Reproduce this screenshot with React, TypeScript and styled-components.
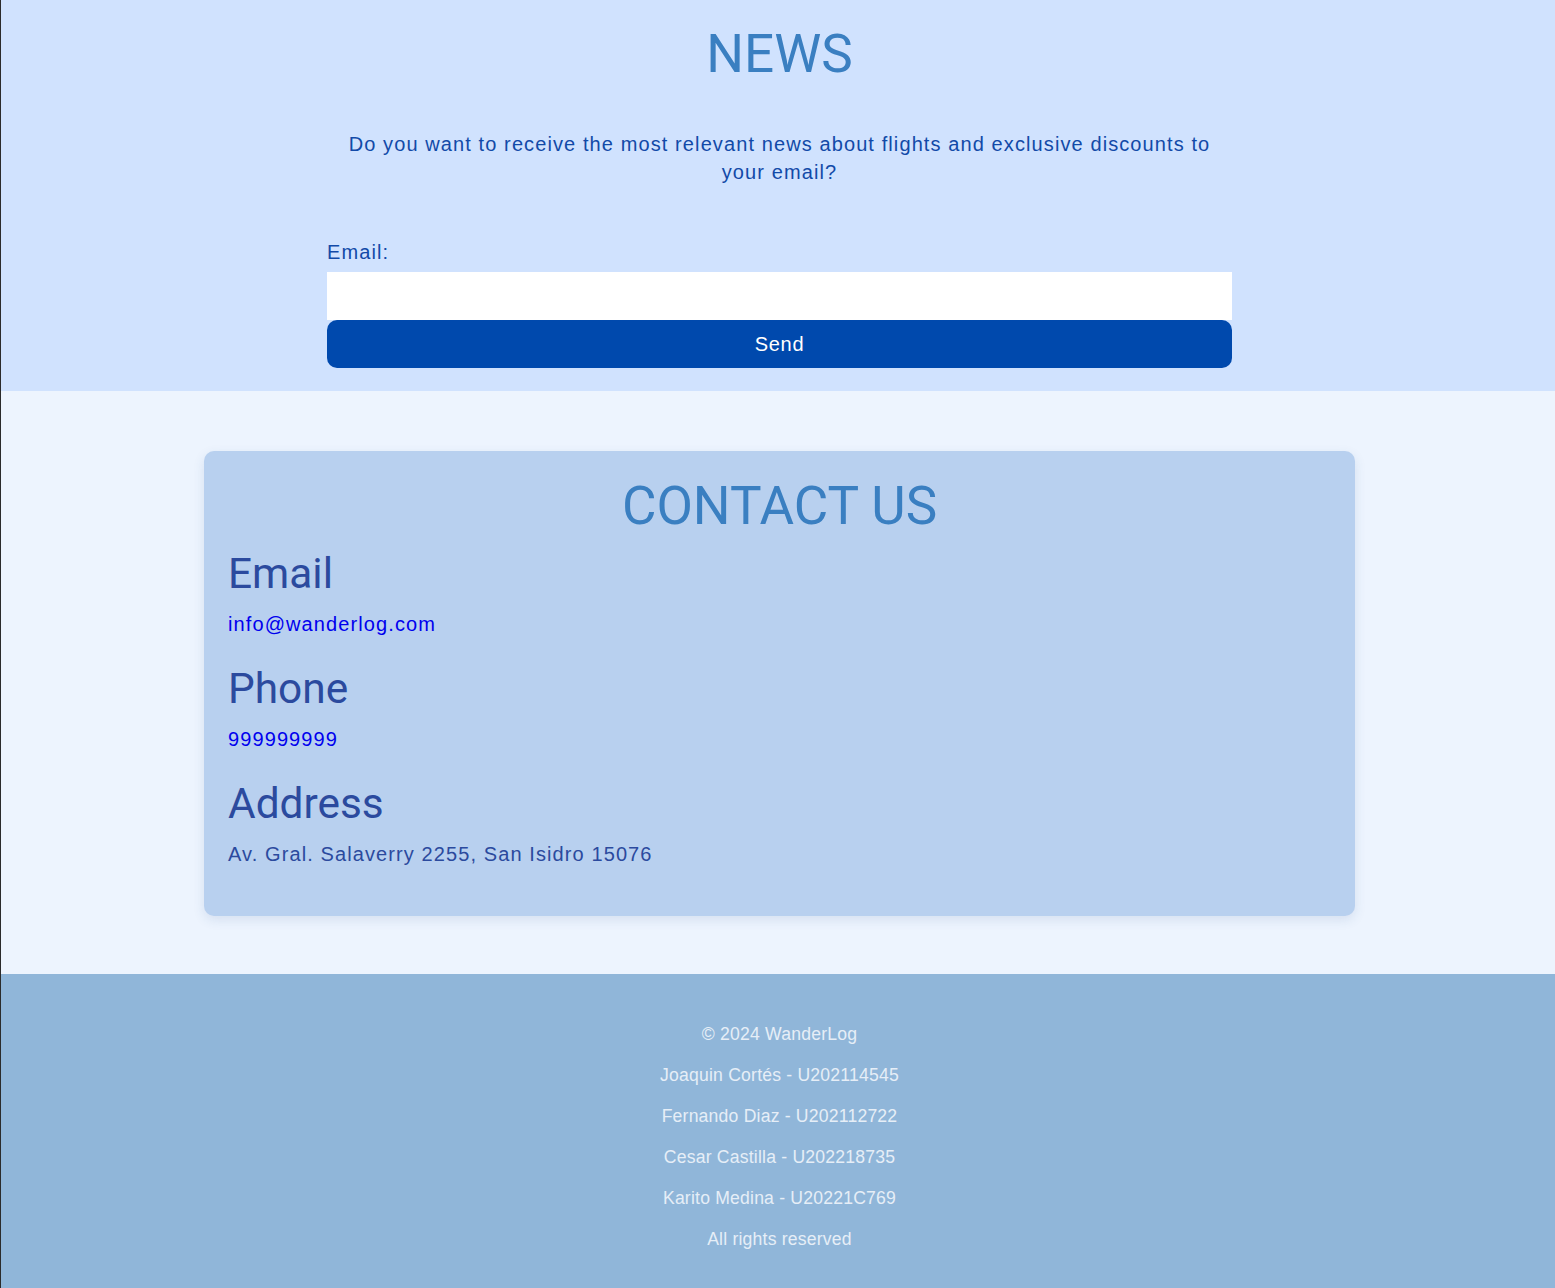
import React from "react";
import styled, { createGlobalStyle } from "styled-components";

const Global = createGlobalStyle`
  html, body { margin: 0; padding: 0; }
  body { font-family: "Liberation Sans", Arial, sans-serif; background: #edf4fe; }
  #root { border-left: 1px solid #2b2b2b; }
`;

const NewsSection = styled.section`
  background: #d0e2fe;
  display: flex;
  flex-direction: column;
  align-items: center;
  padding: 23px 0 23px 3px;
`;

const Title = styled.h1`
  margin: 0;
  font-family: Roboto, sans-serif;
  font-weight: 400;
  font-size: 53px;
  line-height: 62px;
  color: #3a7fc1;
  text-align: center;
`;

const Lead = styled.p`
  margin: 45px 0 0;
  width: 900px;
  text-align: center;
  font-size: 20px;
  line-height: 28px;
  letter-spacing: 1.1px;
  color: #124aa8;
`;

const Form = styled.form`
  width: 905px;
  margin-top: 54px;
  display: flex;
  flex-direction: column;
`;

const Label = styled.label`
  font-size: 20px;
  line-height: 24px;
  letter-spacing: 1.1px;
  color: #124aa8;
  margin-bottom: 8px;
`;

const Input = styled.input`
  height: 48px;
  border: none;
  outline: none;
  background: #fff;
  padding: 0 12px;
  box-sizing: border-box;
  font-size: 18px;
`;

const Button = styled.button`
  height: 48px;
  border: none;
  border-radius: 10px;
  background: #0049ad;
  color: #fff;
  font-family: "Liberation Sans", Arial, sans-serif;
  font-size: 20px;
  letter-spacing: 0.75px;
  cursor: pointer;
`;

const ContactSection = styled.section`
  background: #edf4fe;
  padding: 60px 0 58px 3px;
  display: flex;
  justify-content: center;
`;

const Card = styled.div`
  width: 1151px;
  box-sizing: border-box;
  background: #b8d0ef;
  border-radius: 10px;
  box-shadow: 0 4px 12px rgba(40, 80, 140, 0.12);
  padding: 24px 24px 50px;
  display: flex;
  flex-direction: column;
`;

const ContactList = styled.div`
  margin-top: 12px;
  display: flex;
  flex-direction: column;
  gap: 28px;
`;

const Item = styled.div`
  display: flex;
  flex-direction: column;
  align-items: flex-start;
  gap: 14px;
`;

const SubTitle = styled.h3`
  margin: 0;
  font-family: Roboto, sans-serif;
  font-weight: 400;
  font-size: 42.4px;
  line-height: 49px;
  color: #2b4a9e;
`;

const Info = styled.a<{ $plain?: boolean }>`
  margin: 0;
  font-size: 20px;
  line-height: 24px;
  letter-spacing: 1.1px;
  color: ${(p) => (p.$plain ? "#2b4a9e" : "#0000ee")};
  text-decoration: none;
`;

const Footer = styled.footer`
  background: #90b6d9;
  padding: 50px 0 40px 3px;
  display: flex;
  flex-direction: column;
  align-items: center;
  gap: 20px;
`;

const FootLine = styled.p`
  margin: 0;
  font-size: 17.6px;
  line-height: 21px;
  letter-spacing: 0.2px;
  color: #e6eef7;
`;

const contacts = [
  { title: "Email", text: "info@wanderlog.com", href: "mailto:info@wanderlog.com" },
  { title: "Phone", text: "999999999", href: "tel:999999999" },
  { title: "Address", text: "Av. Gral. Salaverry 2255, San Isidro 15076" },
];

const credits = [
  "© 2024 WanderLog",
  "Joaquin Cortés - U202114545",
  "Fernando Diaz - U202112722",
  "Cesar Castilla - U202218735",
  "Karito Medina - U20221C769",
  "All rights reserved",
];

export default function App() {
  return (
    <>
      <Global />
      <NewsSection>
        <Title>NEWS</Title>
        <Lead>
          Do you want to receive the most relevant news about flights and exclusive discounts to your email?
        </Lead>
        <Form onSubmit={(e) => e.preventDefault()}>
          <Label htmlFor="email">Email:</Label>
          <Input id="email" type="email" />
          <Button type="submit">Send</Button>
        </Form>
      </NewsSection>
      <ContactSection>
        <Card>
          <Title>CONTACT US</Title>
          <ContactList>
            {contacts.map((c) => (
              <Item key={c.title}>
                <SubTitle>{c.title}</SubTitle>
                {c.href ? (
                  <Info href={c.href}>{c.text}</Info>
                ) : (
                  <Info as="p" $plain>
                    {c.text}
                  </Info>
                )}
              </Item>
            ))}
          </ContactList>
        </Card>
      </ContactSection>
      <Footer>
        {credits.map((t) => (
          <FootLine key={t}>{t}</FootLine>
        ))}
      </Footer>
    </>
  );
}
